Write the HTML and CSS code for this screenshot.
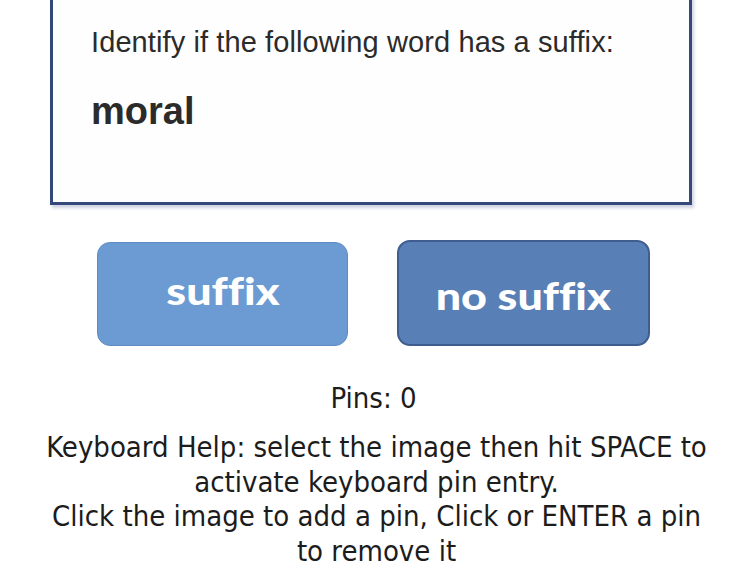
FILE: index.html
```html
<!DOCTYPE html>
<html lang="en">
<head>
<meta charset="utf-8">
<title>Suffix question</title>
<link rel="stylesheet" href="styles.css">
</head>
<body>
<main class="page">
  <section class="card">
    <p class="prompt">Identify if the following word has a suffix:</p>
    <p class="word">moral</p>
  </section>
  <div class="choices">
    <button class="choice choice-a" type="button"><span>suffix</span></button>
    <button class="choice choice-b" type="button"><span>no suffix</span></button>
  </div>
  <p class="pins">Pins: 0</p>
  <div class="help">
    <p>Keyboard Help: select the image then hit SPACE to activate keyboard pin entry.</p>
    <p>Click the image to add a pin, Click or ENTER a pin to remove it</p>
  </div>
</main>
</body>
</html>
```
FILE: styles.css
```css
html, body {
  margin: 0;
  padding: 0;
  background: #ffffff;
}
body {
  width: 753px;
  height: 570px;
  overflow: hidden;
}
.page {
  display: flex;
  flex-direction: column;
  align-items: stretch;
}
.card {
  margin: -20px 0 0 50px;
  width: 642px;
  height: 225px;
  box-sizing: border-box;
  border: 3px solid #34497a;
  background: #fefefe;
  box-shadow: 2px 3px 3px rgba(60, 80, 130, 0.25);
  padding: 0 0 0 38px;
  font-family: "Liberation Sans", Arial, sans-serif;
  color: #2b2b2b;
}
.prompt {
  margin: 0;
  padding-top: 34px;
  font-size: 29px;
  line-height: 50px;
  letter-spacing: 0.1px;
}
.word {
  margin: 0;
  padding-top: 19px;
  font-size: 38px;
  font-weight: bold;
  line-height: 50px;
}
.choices {
  display: flex;
  align-items: flex-start;
  gap: 49px;
  margin: 35px 0 0 97px;
}
.choice {
  box-sizing: border-box;
  border-radius: 13px;
  color: #ffffff;
  font-family: Lato, "Open Sans", sans-serif;
  font-weight: 900;
  font-size: 38px;
  font-variant-ligatures: none;
  padding: 0;
  display: flex;
  justify-content: center;
}
.choice span {
  display: inline-block;
  transform: scaleX(1.18);
}
.choice-a {
  width: 251px;
  height: 104px;
  margin-top: 2px;
  background: #6b9bd2;
  border: 1.5px solid #5d8cc4;
  align-items: center;
  padding-bottom: 8px;
}
.choice-b {
  width: 253px;
  height: 106px;
  background: #587fb6;
  border: 2px solid #3f5d8e;
  align-items: center;
  padding-top: 4px;
}
.pins {
  margin: 35px 0 0 0;
  text-align: center;
  font-family: "DejaVu Sans Condensed", "DejaVu Sans", sans-serif;
  font-size: 29px;
  line-height: 34px;
  color: #1c1c1c;
  padding-right: 6px;
}
.help {
  margin-top: 15px;
  text-align: center;
  font-family: "DejaVu Sans Condensed", "DejaVu Sans", sans-serif;
  font-size: 29px;
  line-height: 34.7px;
  color: #1c1c1c;
  padding: 0 38px;
}
.help p {
  margin: 0;
}
```
